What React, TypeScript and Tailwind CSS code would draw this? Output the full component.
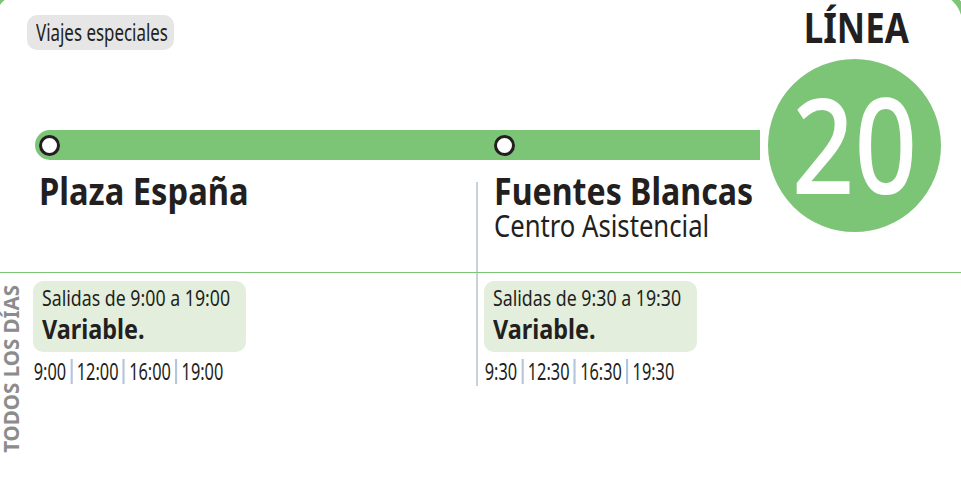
import React from "react";

const GREEN = "bg-[#7cc576]";

function Stop() {
  return <div className="h-[21px] w-[21px] rounded-full border-[3.5px] border-[#231f20] bg-white" />;
}

function Times({ items }: { items: string[] }) {
  return (
    <div className="mt-[7px] flex origin-left scale-x-[0.71] items-center whitespace-nowrap pl-[1px]">
      {items.map((t, i) => (
        <React.Fragment key={t}>
          {i > 0 && <span className="mx-[6px] h-[25px] w-[3px] bg-[#b3c6dc]" />}
          <span className="text-[23px] leading-none">{t}</span>
        </React.Fragment>
      ))}
    </div>
  );
}

function InfoBox({ range }: { range: string }) {
  return (
    <div className="h-[71px] w-[213px] rounded-[10px] bg-[#e3efdc] pl-[9px] pt-[7px]">
      <div className="origin-left scale-x-[0.845] whitespace-nowrap text-[21px] leading-none">{range}</div>
      <div className="mt-[7px] origin-left scale-x-[0.9] whitespace-nowrap text-[26px] font-bold leading-none">
        Variable.
      </div>
    </div>
  );
}

export default function App() {
  return (
    <div className="relative h-[482px] w-[961px] overflow-hidden bg-white font-['Noto_Sans',sans-serif] text-[#231f20]">
      {/* Row A: header */}
      <div className="flex h-[273px] border-b border-[#7cc576]">
        <div className="flex w-[760px] flex-col">
          <div className="flex pl-[27px] pt-[15px]">
            <div className="flex h-[35px] w-[147px] items-center rounded-[10px] bg-[#e6e6e6] pl-[9px]">
              <span className="inline-block origin-left scale-x-[0.735] whitespace-nowrap text-[23px] leading-none">
                Viajes especiales
              </span>
            </div>
          </div>
          <div className={`ml-[35px] mt-[80px] grid h-[30px] grid-cols-[441px_1fr] items-center rounded-l-full ${GREEN}`}>
            <div className="pl-[4px]">
              <Stop />
            </div>
            <div className="pl-[18px]">
              <Stop />
            </div>
          </div>
          <div className="ml-[35px] grid flex-1 grid-cols-[441px_1fr]">
            <div className="pl-[4px] pt-[11px]">
              <div className="origin-left scale-x-[0.86] whitespace-nowrap text-[38px] font-bold leading-none">
                Plaza España
              </div>
            </div>
            <div className="mt-[22px] border-l-2 border-[#c9d2db] pl-[16px]">
              <div className="-mt-[11px] origin-left scale-x-[0.845] whitespace-nowrap text-[38px] font-bold leading-none">
                Fuentes Blancas
              </div>
              <div className="mt-[2px] origin-left scale-x-[0.855] whitespace-nowrap text-[30px] leading-none">
                Centro Asistencial
              </div>
            </div>
          </div>
        </div>
        <div className="flex flex-1 flex-col">
          <div className="flex w-[189px] justify-center pl-[4px] pt-[6px]">
            <span className="inline-block scale-x-[0.83] whitespace-nowrap text-[42px] font-bold leading-none">LÍNEA</span>
          </div>
          <div className={`mt-[3px] flex h-[189px] w-[189px] items-center justify-center rounded-full border-[8px] border-white ${GREEN}`}>
            <span className="mb-[5px] inline-block scale-x-[0.83] text-[132px] font-medium leading-none text-white">20</span>
          </div>
        </div>
      </div>

      {/* Row B: schedule */}
      <div className="flex items-start">
        <div className="w-[33px] pl-[1px] pt-[12px]">
          <div className="rotate-180 whitespace-nowrap text-[20.5px] font-bold leading-none text-[#8c8c8c] [writing-mode:vertical-rl]">
            TODOS LOS DÍAS
          </div>
        </div>
        <div className="w-[443px] pt-[8px]">
          <InfoBox range="Salidas de 9:00 a 19:00" />
          <Times items={["9:00", "12:00", "16:00", "19:00"]} />
        </div>
        <div className="border-l-2 border-[#c9d2db] pb-[2px] pl-[6px] pt-[8px]">
          <InfoBox range="Salidas de 9:30 a 19:30" />
          <Times items={["9:30", "12:30", "16:30", "19:30"]} />
        </div>
      </div>

      {/* frame edge of the card */}
      <div className="pointer-events-none absolute left-[-12px] top-[-13px] h-[600px] w-[980px] rounded-[36px] border-[6px] border-[#7cc576]" />
    </div>
  );
}
